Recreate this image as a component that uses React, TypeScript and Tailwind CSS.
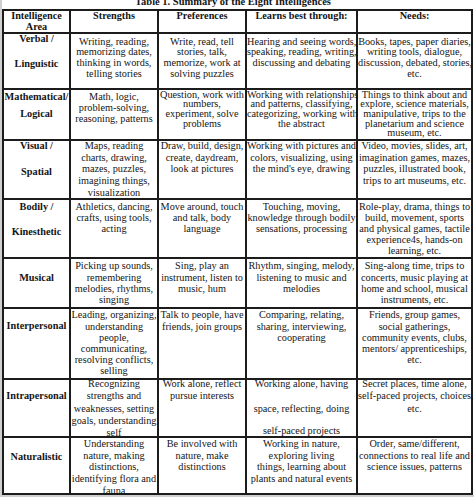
type Line = string | [string, string];
type Cell = Line[] | { lines: Line[]; cls: string };

type Row = {
  lead: string;
  label: Line[];
  labelTop: string;
  top: string;
  cells: Cell[];
};

// first entry is the header row
const rows: Row[] = [
  {
    lead: 'leading-[11px]',
    label: ['Intelligence', 'Area'],
    labelTop: '-mt-[1.2px]',
    top: '-mt-[1.2px]',
    cells: [['Strengths'], ['Preferences'], ['Learns best through:'], ['Needs:']],
  },
  {
    lead: 'leading-[10.8px]',
    label: ['Verbal /', ['Linguistic', 'mt-[14.2px]']],
    labelTop: 'pt-0',
    top: 'pt-[2.6px]',
    cells: [
      ['Writing, reading,', 'memorizing dates,', 'thinking in words,', 'telling stories'],
      ['Write, read, tell', 'stories, talk,', 'memorize, work at', 'solving puzzles'],
      ['Hearing and seeing words,', 'speaking, reading, writing,', 'discussing and debating'],
      ['Books, tapes, paper diaries,', 'writing tools, dialogue,', 'discussion, debated, stories,', 'etc.'],
    ],
  },
  {
    lead: 'leading-[11px]',
    label: ['Mathematical/', ['Logical', 'mt-[6.3px]']],
    labelTop: 'pt-[0.5px]',
    top: 'pt-[0.5px]',
    cells: [
      ['Math, logic,', 'problem-solving,', 'reasoning, patterns'],
      { lines: ['Question, work with', 'numbers,', 'experiment, solve', 'problems'], cls: 'leading-[9.7px] -mt-[0.5px]' },
      { lines: ['Working with relationships', 'and patterns, classifying,', 'categorizing, working with', 'the abstract'], cls: 'leading-[9.7px] -mt-[0.5px]' },
      {
        lines: ['Things to think about and', 'explore, science materials,', 'manipulative, trips to the', 'planetarium and science', 'museum, etc.'],
        cls: 'leading-[9.7px] -mt-[0.5px]',
      },
    ],
  },
  {
    lead: 'leading-[11.6px]',
    label: ['Visual /', ['Spatial', 'mt-[14px]']],
    labelTop: '-mt-[0.8px]',
    top: '-mt-[0.8px]',
    cells: [
      ['Maps, reading', 'charts, drawing,', 'mazes, puzzles,', 'imagining things,', 'visualization'],
      ['Draw, build, design,', 'create, daydream,', 'look at pictures'],
      ['Working with pictures and', 'colors, visualizing, using', "the mind's eye, drawing"],
      ['Video, movies, slides, art,', 'imagination games, mazes,', 'puzzles, illustrated book,', 'trips to art museums, etc.'],
    ],
  },
  {
    lead: 'leading-[11.1px]',
    label: ['Bodily /', ['Kinesthetic', 'mt-[13.9px]']],
    labelTop: 'pt-[1px]',
    top: 'pt-[1px]',
    cells: [
      ['Athletics, dancing,', 'crafts, using tools,', 'acting'],
      ['Move around, touch', 'and talk, body', 'language'],
      ['Touching, moving,', 'knowledge through bodily', 'sensations, processing'],
      ['Role-play, drama, things to', 'build, movement, sports', 'and physical games, tactile', 'experience4s, hands-on', 'learning, etc.'],
    ],
  },
  {
    lead: 'leading-[11.3px]',
    label: ['Musical'],
    labelTop: 'pt-[13px]',
    top: 'pt-[1.3px]',
    cells: [
      ['Picking up sounds,', 'remembering', 'melodies, rhythms,', 'singing'],
      ['Sing, play an', 'instrument, listen to', 'music, hum'],
      ['Rhythm, singing, melody,', 'listening to music and', 'melodies'],
      ['Sing-along time, trips to', 'concerts, music playing at', 'home and school, musical', 'instruments, etc.'],
    ],
  },
  {
    lead: 'leading-[11.2px]',
    label: ['Interpersonal'],
    labelTop: 'pt-[11.4px]',
    top: 'pt-[0.3px]',
    cells: [
      ['Leading, organizing,', 'understanding', 'people,', 'communicating,', 'resolving conflicts,', 'selling'],
      ['Talk to people, have', 'friends, join groups'],
      ['Comparing, relating,', 'sharing, interviewing,', 'cooperating'],
      ['Friends, group games,', 'social gatherings,', 'community events, clubs,', 'mentors/ apprenticeships,', 'etc.'],
    ],
  },
  {
    lead: 'leading-[12.2px]',
    label: ['Intrapersonal'],
    labelTop: 'pt-[10.2px]',
    top: '-mt-[1.8px]',
    cells: [
      ['Recognizing', 'strengths and', 'weaknesses, setting', 'goals, understanding', 'self'],
      ['Work alone, reflect', 'pursue interests'],
      ['Working alone, having', ['space, reflecting, doing', 'mt-[12.8px]'], ['self-paced projects', 'mt-[9.8px]']],
      ['Secret places, time alone,', 'self-paced projects, choices,', 'etc.'],
    ],
  },
  {
    lead: 'leading-[11.7px]',
    label: ['Naturalistic'],
    labelTop: 'pt-[13.1px]',
    top: 'pt-0',
    cells: [
      ['Understanding', 'nature, making', 'distinctions,', 'identifying flora and', 'fauna'],
      ['Be involved with', 'nature, make', 'distinctions'],
      ['Working in nature,', 'exploring living', 'things, learning about', 'plants and natural events'],
      ['Order, same/different,', 'connections to real life and', 'science issues, patterns'],
    ],
  },
];

const Lines = ({ lines, cls }: { lines: Line[]; cls: string }) => (
  <div className={cls}>
    {lines.map((l, i) => {
      const [text, extra] = typeof l === 'string' ? [l, ''] : l;
      return (
        <div key={i} className={`whitespace-nowrap ${extra}`}>
          {text}
        </div>
      );
    })}
  </div>
);

export default function App() {
  return (
    <div className="flex h-[497px] w-[474px] overflow-hidden bg-[#cfcfcf] [font-family:'Liberation_Serif','Times_New_Roman',serif] text-[#151515]">
      <div className="ml-[2px] flex h-[495px] w-[472px] flex-col bg-white">
        <div className="h-[9px] overflow-hidden">
          <div className="-mt-[3px] whitespace-nowrap pl-[133px] text-[10.5px] font-bold leading-[10.5px]">
            Table 1. Summary of the Eight Intelligences
          </div>
        </div>

        <div className="grid w-fit grid-cols-[65px_86px_86px_109px_113px] grid-rows-[21px_54px_49px_57px_57px_48px_69px_56px_55px] gap-[2px] bg-[#1c1c1c] p-[2px] text-[10.25px]">
          {rows.map((row, r) => (
            <>
              <div key={`l${r}`} className={`bg-white text-center font-bold ${row.lead}`}>
                <Lines lines={row.label} cls={row.labelTop} />
              </div>
              {row.cells.map((cell, c) => (
                <div key={`c${r}-${c}`} className={`bg-white text-center ${row.lead} ${r === 0 ? 'font-bold' : ''}`}>
                  {Array.isArray(cell) ? (
                    <Lines lines={cell} cls={row.top} />
                  ) : (
                    <Lines lines={cell.lines} cls={cell.cls} />
                  )}
                </div>
              ))}
            </>
          ))}
        </div>
      </div>
    </div>
  );
}
